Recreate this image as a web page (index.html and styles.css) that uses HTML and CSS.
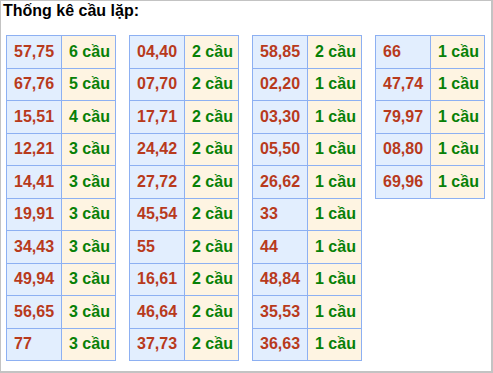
FILE: index.html
```html
<!DOCTYPE html>
<html lang="vi">
<head>
<meta charset="utf-8">
<title>Thống kê cầu lặp</title>
<link rel="stylesheet" href="styles.css">
</head>
<body>
<div class="box">
  <div class="title">Thống kê cầu lặp:</div>
  <div class="tables">
    <table class="stat">
      <tr><td class="num">57,75</td><td class="cnt">6 cầu</td></tr>
      <tr><td class="num">67,76</td><td class="cnt">5 cầu</td></tr>
      <tr><td class="num">15,51</td><td class="cnt">4 cầu</td></tr>
      <tr><td class="num">12,21</td><td class="cnt">3 cầu</td></tr>
      <tr><td class="num">14,41</td><td class="cnt">3 cầu</td></tr>
      <tr><td class="num">19,91</td><td class="cnt">3 cầu</td></tr>
      <tr><td class="num">34,43</td><td class="cnt">3 cầu</td></tr>
      <tr><td class="num">49,94</td><td class="cnt">3 cầu</td></tr>
      <tr><td class="num">56,65</td><td class="cnt">3 cầu</td></tr>
      <tr><td class="num">77</td><td class="cnt">3 cầu</td></tr>
    </table>
    <table class="stat">
      <tr><td class="num">04,40</td><td class="cnt">2 cầu</td></tr>
      <tr><td class="num">07,70</td><td class="cnt">2 cầu</td></tr>
      <tr><td class="num">17,71</td><td class="cnt">2 cầu</td></tr>
      <tr><td class="num">24,42</td><td class="cnt">2 cầu</td></tr>
      <tr><td class="num">27,72</td><td class="cnt">2 cầu</td></tr>
      <tr><td class="num">45,54</td><td class="cnt">2 cầu</td></tr>
      <tr><td class="num">55</td><td class="cnt">2 cầu</td></tr>
      <tr><td class="num">16,61</td><td class="cnt">2 cầu</td></tr>
      <tr><td class="num">46,64</td><td class="cnt">2 cầu</td></tr>
      <tr><td class="num">37,73</td><td class="cnt">2 cầu</td></tr>
    </table>
    <table class="stat">
      <tr><td class="num">58,85</td><td class="cnt">2 cầu</td></tr>
      <tr><td class="num">02,20</td><td class="cnt">1 cầu</td></tr>
      <tr><td class="num">03,30</td><td class="cnt">1 cầu</td></tr>
      <tr><td class="num">05,50</td><td class="cnt">1 cầu</td></tr>
      <tr><td class="num">26,62</td><td class="cnt">1 cầu</td></tr>
      <tr><td class="num">33</td><td class="cnt">1 cầu</td></tr>
      <tr><td class="num">44</td><td class="cnt">1 cầu</td></tr>
      <tr><td class="num">48,84</td><td class="cnt">1 cầu</td></tr>
      <tr><td class="num">35,53</td><td class="cnt">1 cầu</td></tr>
      <tr><td class="num">36,63</td><td class="cnt">1 cầu</td></tr>
    </table>
    <table class="stat">
      <tr><td class="num">66</td><td class="cnt">1 cầu</td></tr>
      <tr><td class="num">47,74</td><td class="cnt">1 cầu</td></tr>
      <tr><td class="num">79,97</td><td class="cnt">1 cầu</td></tr>
      <tr><td class="num">08,80</td><td class="cnt">1 cầu</td></tr>
      <tr><td class="num">69,96</td><td class="cnt">1 cầu</td></tr>
    </table>
  </div>
</div>
</body>
</html>
```
FILE: styles.css
```css
html, body {
  margin: 0;
  padding: 0;
  background: #ffffff;
}
.box {
  box-sizing: border-box;
  width: 493px;
  height: 373px;
  border-style: solid;
  border-color: #c3c3c3;
  border-width: 1px 2px 2px 1px;
  font-family: "Liberation Sans", Arial, sans-serif;
}
.title {
  font-size: 16px;
  font-weight: bold;
  color: #000;
  line-height: 18px;
  padding: 1px 0 0 2px;
}
.tables {
  display: flex;
  align-items: flex-start;
  gap: 13px;
  margin-top: 15px;
  padding-left: 5px;
}
.stat {
  border-collapse: collapse;
  table-layout: fixed;
  width: 110px;
}
.stat tr {
  height: 32.5px;
}
.stat td {
  border: 1px solid #8db0f2;
  padding: 0 0 0 7px;
  font-size: 16px;
  font-weight: bold;
  white-space: nowrap;
  vertical-align: middle;
}
.stat td.num {
  width: 47px;
  background: #e2eefe;
  color: #b83a1c;
}
.stat td.cnt {
  background: #fef4e2;
  color: #078007;
}
```
